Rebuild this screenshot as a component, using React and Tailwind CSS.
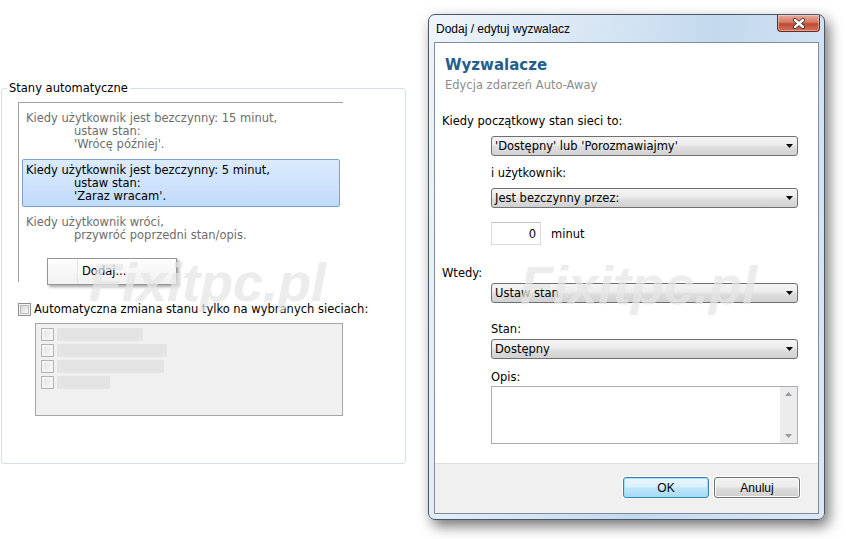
import React from "react";

function Check({ disabled }) {
  return (
    <span
      className={
        disabled
          ? "block h-[13px] w-[13px] shrink-0 border border-[#b4b4b4] bg-[#f4f4f4] p-[2px]"
          : "block h-[13px] w-[13px] shrink-0 border border-[#8e8f8f] bg-[#f4f4f4] p-[1px]"
      }
    >
      <span
        className={
          disabled
            ? "block h-full w-full bg-[linear-gradient(135deg,#e2e2e2,#f6f6f6)]"
            : "block h-full w-full border border-[#bcbcbc] bg-[linear-gradient(135deg,#d6d6d6,#f8f8f8)]"
        }
      />
    </span>
  );
}

function Arrow() {
  return (
    <svg width="7" height="4" viewBox="0 0 7 4">
      <path d="M0 0H7L3.5 4Z" fill="#000" />
    </svg>
  );
}

function Combo({ value, className = "" }) {
  return (
    <div
      className={
        "flex h-[20px] w-[307px] items-center justify-between rounded-[3px] border border-[#707070] bg-[linear-gradient(#f4f4f4,#ececec_45%,#dedede_55%,#d1d1d1)] pl-[3px] pr-[4px] text-[11.5px] leading-[14px] text-black " +
        className
      }
    >
      <span>{value}</span>
      <Arrow />
    </div>
  );
}

function VistaButton({ label, primary }) {
  return (
    <div className="rounded-[4px] bg-white p-[1px]">
      <div
        className={
          primary
            ? "flex h-[21px] w-[86px] items-center justify-center rounded-[3px] border border-[#3c7fb1] bg-[linear-gradient(#eaf6fd,#d9f0fc_45%,#bee6fd_55%,#a7d9f5)] text-[12px] text-black shadow-[inset_0_0_0_1px_#9fe1f9]"
            : "flex h-[21px] w-[86px] items-center justify-center rounded-[3px] border border-[#707070] bg-[linear-gradient(#f2f2f2,#ebebeb_45%,#dddddd_55%,#cfcfcf)] text-[12px] text-black shadow-[inset_0_0_0_1px_#fbfbfb]"
        }
      >
        {label}
      </div>
    </div>
  );
}

const triggers = [
  {
    lines: ["Kiedy użytkownik jest bezczynny: 15 minut,", "ustaw stan:", "'Wrócę później'."],
  },
  {
    lines: ["Kiedy użytkownik jest bezczynny: 5 minut,", "ustaw stan:", "'Zaraz wracam'."],
    selected: true,
  },
  {
    lines: ["Kiedy użytkownik wróci,", "przywróć poprzedni stan/opis."],
  },
];

const networks = [86, 110, 107, 53];

export default function App() {
  return (
    <div className="relative flex h-[539px] w-[846px] items-start overflow-hidden bg-white font-['DejaVu_Sans',sans-serif]">
      {/* Stany automatyczne */}
      <fieldset className="ml-[1px] mt-[82px] h-[382px] w-[405px] rounded-[3px] border border-[#d5dfe5]">
        <legend className="ml-[5px] px-[2px] text-[11.5px] leading-[13px] text-black">
          Stany automatyczne
        </legend>

        <div className="ml-[16px] mt-[7px] h-[180px] w-[325px] border-l border-t border-[#a0a0a0] pt-[4px]">
          {triggers.map((t, i) => (
            <div
              key={i}
              className={
                t.selected
                  ? "ml-[3px] mt-[4px] w-[318px] rounded-[2px] border border-[#7da2ce] bg-[linear-gradient(#dcebfc,#c1dbfc)] pb-[3px] pl-[3px] pt-[4px] text-[11.5px] leading-[13px] text-black"
                  : "ml-[3px] mt-[4px] w-[318px] border border-transparent pb-[3px] pl-[3px] pt-[4px] text-[11.5px] leading-[13px] text-[#6d6d6d] first:mt-0"
              }
            >
              {t.lines.map((l, j) => (
                <div key={j} className={j > 0 ? "pl-[48px]" : ""}>
                  {l}
                </div>
              ))}
            </div>
          ))}

          <div className="ml-[28px] mt-[12px] flex h-[27px] w-[130px] items-center border border-[#979797] bg-[linear-gradient(#fdfdfd,#f1f1f1)] shadow-[2px_2px_3px_rgba(0,0,0,0.35)]">
            <span className="h-full w-[30px] border-r border-[#e2e2e2]" />
            <span className="border-l border-white pl-[3px] text-[11.5px] leading-[13px] text-black">
              Dodaj...
            </span>
          </div>
        </div>

        <div className="ml-[16px] mt-[20px] flex h-[14px] items-center">
          <Check />
          <span className="ml-[3px] text-[11.5px] leading-[13px] text-black">
            Automatyczna zmiana stanu tylko na wybranych sieciach:
          </span>
        </div>

        <div className="ml-[33px] mt-[7px] flex h-[93px] w-[308px] flex-col gap-[3px] border border-[#a5a5a5] bg-[#f0f0f0] pl-[5px] pt-[4px]">
          {networks.map((w, i) => (
            <div key={i} className="flex h-[13px] items-center">
              <Check disabled />
              <span className="ml-[3px] h-[13px] bg-[#e4e4e4]" style={{ width: w }} />
            </div>
          ))}
        </div>
      </fieldset>

      {/* Dialog */}
      <div className="ml-[22px] mt-[14px] flex h-[506px] w-[397px] flex-col rounded-[7px] border border-[#4b5766] bg-[linear-gradient(100deg,#eef4fa,#d4e4f3_40%,#c4d9ee_60%,#dbe8f5)] px-[5px] pb-[5px] shadow-[4px_6px_14px_rgba(0,0,0,0.55)]">
        <div className="flex h-[27px] items-start">
          <span className="ml-[2px] self-center font-['Liberation_Sans',sans-serif] text-[12px] leading-[14px] text-black">
            Dodaj / edytuj wyzwalacz
          </span>
          <div className="-mr-[1px] ml-auto flex h-[17px] w-[43px] items-center justify-center rounded-b-[4px] border border-t-0 border-[#6b2b20] bg-[linear-gradient(#e9a99b,#d47a66_45%,#c24a32_55%,#d0735c)] shadow-[inset_0_0_0_1px_rgba(255,255,255,0.35)]">
            <svg width="14" height="11" viewBox="0 0 14 11">
              <path d="M3 2L11 9M11 2L3 9" stroke="#3b2a28" strokeWidth="4" strokeLinecap="round" />
              <path d="M3 2L11 9M11 2L3 9" stroke="#ffffff" strokeWidth="2.4" strokeLinecap="round" />
            </svg>
          </div>
        </div>

        <div className="flex flex-1 flex-col border border-[#7e8c9b] bg-white">
          <div className="flex flex-1 flex-col">
            <div className="ml-[10px] mt-[13px] text-[15px] font-bold leading-[18px] text-[#275d8c]">
              Wyzwalacze
            </div>
            <div className="ml-[10px] mt-[4px] text-[11.5px] leading-[14px] text-[#8c8c8c]">
              Edycja zdarzeń Auto-Away
            </div>

            <div className="ml-[7px] mt-[22px] text-[11.5px] leading-[14px] text-black">
              Kiedy początkowy stan sieci to:
            </div>
            <Combo value="'Dostępny' lub 'Porozmawiajmy'" className="ml-[56px] mt-[8px]" />
            <div className="ml-[56px] mt-[10px] text-[11.5px] leading-[14px] text-black">
              i użytkownik:
            </div>
            <Combo value="Jest bezczynny przez:" className="ml-[56px] mt-[8px]" />
            <div className="ml-[56px] mt-[14px] flex h-[23px] items-center">
              <div className="flex h-[23px] w-[50px] items-center justify-end border border-[#dadada] border-t-[#c4c4c4] pr-[4px] text-[11.5px] leading-[14px] text-black">
                0
              </div>
              <span className="ml-[10px] text-[11.5px] leading-[14px] text-black">minut</span>
            </div>

            <div className="ml-[7px] mt-[21px] text-[11.5px] leading-[14px] text-black">Wtedy:</div>
            <Combo value="Ustaw stan" className="ml-[56px] mt-[3px]" />
            <div className="ml-[56px] mt-[19px] text-[11.5px] leading-[14px] text-black">Stan:</div>
            <Combo value="Dostępny" className="ml-[56px] mt-[3px]" />
            <div className="ml-[56px] mt-[11px] text-[11.5px] leading-[14px] text-black">Opis:</div>
            <div className="ml-[56px] mt-[2px] flex h-[58px] w-[307px] justify-end border border-[#abadb3]">
              <div className="flex w-[17px] flex-col items-center justify-between bg-[#ececec] py-[5px]">
                <svg width="7" height="4" viewBox="0 0 7 4">
                  <path d="M0 4H7L3.5 0Z" fill="#9b9b9b" />
                </svg>
                <svg width="7" height="4" viewBox="0 0 7 4">
                  <path d="M0 0H7L3.5 4Z" fill="#9b9b9b" />
                </svg>
              </div>
            </div>
          </div>

          <div className="flex h-[50px] justify-end gap-[3px] border-t border-[#dfdfdf] bg-[#f0f0f0] pr-[17px] pt-[12px] font-['Liberation_Sans',sans-serif]">
            <div>
              <VistaButton label="OK" primary />
            </div>
            <div>
              <VistaButton label="Anuluj" />
            </div>
          </div>
        </div>
      </div>

      {/* watermarks */}
      <span className="pointer-events-none absolute left-[89px] top-[255px] font-['Liberation_Sans',sans-serif] text-[54px] font-bold italic leading-none text-[rgba(238,238,238,0.7)] [text-shadow:0_0_1px_rgba(0,0,0,0.09)]">
        Fixitpc.pl
      </span>
      <span className="pointer-events-none absolute left-[520px] top-[258px] font-['Liberation_Sans',sans-serif] text-[54px] font-bold italic leading-none text-[rgba(238,238,238,0.7)] [text-shadow:0_0_1px_rgba(0,0,0,0.09)]">
        Fixitpc.pl
      </span>
    </div>
  );
}
